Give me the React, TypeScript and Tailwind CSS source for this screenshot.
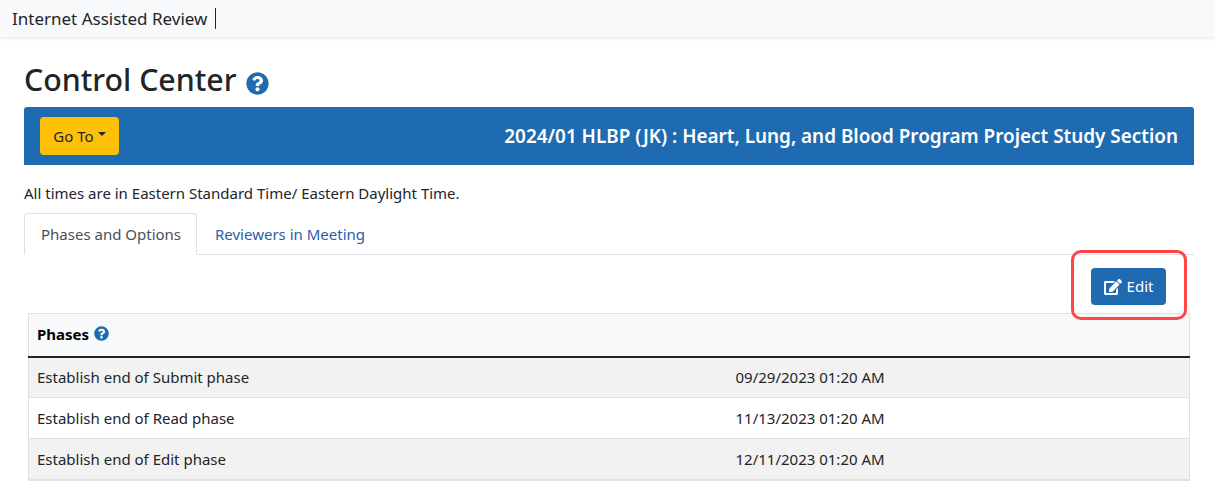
import { FaEdit, FaQuestionCircle } from "react-icons/fa";

const phases = [
  { name: "Establish end of Submit phase", date: "09/29/2023 01:20 AM", shade: true },
  { name: "Establish end of Read phase", date: "11/13/2023 01:20 AM", shade: false },
  { name: "Establish end of Edit phase", date: "12/11/2023 01:20 AM", shade: true },
];

export default function App() {
  return (
    <div className="h-[485px] overflow-hidden bg-white font-['Noto_Sans','Open_Sans',sans-serif] text-[15px] text-[#212529]">
      <nav className="flex h-[37px] items-center bg-[#f8f9fa] pl-3 shadow-[0_1px_4px_rgba(0,0,0,0.1)]">
        <span className="border-r border-[#212529] pr-2 text-[17px] leading-[21px]">Internet Assisted Review</span>
      </nav>

      <main className="pr-[21px] pl-6">
        <h1 className="mt-[19px] mb-[3px] flex h-12 items-center gap-[9px] text-[30.3px] font-medium">
          Control Center
          <FaQuestionCircle className="mt-[6px] text-[23px] text-[#1f6bb1]" />
        </h1>

        <div className="flex h-[58px] items-center justify-between rounded-t-[3px] bg-[#1f6bb1] pr-4 pl-4">
          <button className="flex h-[38px] w-[79px] items-center justify-center gap-1 rounded-[4px] bg-[#ffc107] text-[15px] text-[#212529]">
            Go To
            <span className="mb-1 border-x-[4px] border-t-[4px] border-x-transparent border-t-[#212529]" />
          </button>
          <h2 className="text-[18.9px] font-semibold text-white">2024/01 HLBP (JK) : Heart, Lung, and Blood Program Project Study Section</h2>
        </div>

        <p className="mt-[18px] h-5 leading-5">All times are in Eastern Standard Time/ Eastern Daylight Time.</p>

        <div className="mt-[10px] flex h-[42px] border-b border-[#dee2e6]">
          <div className="-mb-px flex h-[42px] w-[173px] items-center rounded-t-[4px] border border-[#dee2e6] border-b-white bg-white pt-px pl-4 whitespace-nowrap text-[#495057]">
            Phases and Options
          </div>
          <div className="flex items-center px-[18px] pt-px text-[#2a5ea8]">Reviewers in Meeting</div>
        </div>

        <div className="relative flex h-[58px] justify-end pt-[13px] pr-7">
          <button className="flex h-[37px] w-[75px] items-center justify-center gap-[5px] rounded-[4px] bg-[#1f6bb1] text-white">
            <FaEdit className="text-[18px]" />
            Edit
          </button>
          <div className="absolute top-[-5px] right-[7px] h-[70px] w-[116px] rounded-[10px] border-[3px] border-[#ff4545]" />
        </div>

        <table className="ml-1 w-[1162px] border-collapse border border-b-2 border-[#dee2e6]">
          <thead>
            <tr className="h-[43px] border-b-2 border-[#212529] bg-[#f8f9fa]">
              <th colSpan={2} className="px-2 pb-0.5 text-left text-[15px] font-bold text-black">
                <span className="flex items-center gap-[5px]">
                  Phases
                  <FaQuestionCircle className="text-[15px] text-[#1f6bb1]" />
                </span>
              </th>
            </tr>
          </thead>
          <tbody>
            {phases.map((p, i) => (
              <tr key={p.name} className={`h-[41px] border-b border-[#dee2e6] ${p.shade ? "bg-[#f2f2f2]" : "bg-white"}`}>
                <td className={`w-[700px] px-2 ${i > 0 ? "pt-px" : ""}`}>{p.name}</td>
                <td className={`pr-2 pl-[7px] ${i > 0 ? "pt-px" : ""}`}>{p.date}</td>
              </tr>
            ))}
          </tbody>
        </table>
      </main>
    </div>
  );
}
